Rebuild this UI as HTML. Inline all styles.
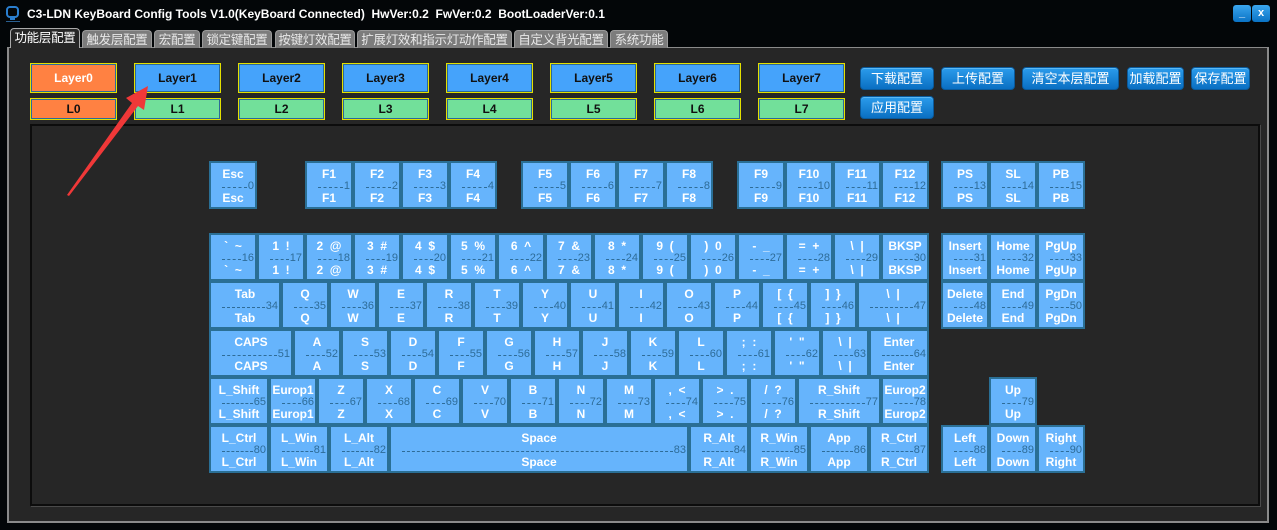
<!DOCTYPE html>
<html><head><meta charset="utf-8"><style>
*{margin:0;padding:0;box-sizing:border-box}
body{width:1277px;height:530px;background:#030608;position:relative;overflow:hidden;font-family:"Liberation Sans","Noto Sans CJK SC",sans-serif}
.title{position:absolute;left:27px;top:7px;color:#fff;font:bold 12px "Liberation Sans",sans-serif;white-space:pre}
.wb{position:absolute;top:5px;width:18px;height:17px;border-radius:3px;background:linear-gradient(#3aa6ee,#0a72c4);color:#fff;font:bold 11px "Liberation Sans",sans-serif;text-align:center;line-height:16px}
.tab{position:absolute;top:30px;height:18px;background:#7c7c7c;color:#e8e8e8;font-size:12.5px;line-height:18px;text-align:center;border-radius:4px 4px 0 0;border:1px solid #9a9a9a;border-bottom:none;white-space:nowrap;overflow:hidden;letter-spacing:-0.3px}
.tab.a{background:#262626;color:#fff;top:28px;height:20px;border-color:#aaa}
.panel{position:absolute;left:7px;top:47px;width:1262px;height:476px;background:#262626;border:2px solid #8a8a8a;border-top:1px solid #8a8a8a}
.inner{position:absolute;left:30px;top:124px;width:1230px;height:382px;background:#262626;border:2px solid #0c0c0c;box-shadow:1px 1px 0 #4a4a4a}
.ly{position:absolute;width:87px;border:1px solid #e4e000;box-shadow:inset 0 0 0 1px #2b6a98;text-align:center;font:bold 12px "Liberation Sans",sans-serif;color:#111}
.ly.t{top:63px;height:30px;line-height:28px;background:#45a3fb}
.ly.b{top:98px;height:22px;line-height:20px;background:#72e09a}
.ly.o{background:#ff8142;color:#fff}
.ly.b.o{color:#111}
.bt{position:absolute;height:23px;border-radius:4px;background:linear-gradient(#2b9cec,#0a6fc2);border:1px solid #0a5a9c;box-shadow:inset 0 1px 0 #5bb8f4;color:#fff;font-size:13px;line-height:21px;text-align:center;white-space:nowrap}
.k{position:absolute;height:48px;background:#66b4fc;border:2px solid #2a6f95;margin:-1px;color:#fff;font:bold 12px "Liberation Sans",sans-serif;text-align:center;white-space:pre}
.k b{position:absolute;left:0;right:0;line-height:13px}
.k b.u{top:5px}.k b.d{top:29px}
.k i{position:absolute;left:11px;right:1px;top:17px;height:13px;display:flex;font:normal 11px "Liberation Sans",sans-serif;color:#2e6c98;line-height:13px}
.k i s{flex:1;border-top:1px dashed #2e6c98;margin-top:7px;margin-right:1px}
</style></head><body>
<svg style="position:absolute;left:5px;top:6px" width="16" height="17"><rect x="2" y="1" width="11" height="10" rx="3" fill="none" stroke="#2a7fd0" stroke-width="2"/><rect x="5" y="11" width="5" height="3" fill="#2a7fd0"/><rect x="1" y="15" width="14" height="1" fill="#2a5f90"/></svg>
<div class="title">C3-LDN KeyBoard Config Tools V1.0(KeyBoard Connected)  HwVer:0.2  FwVer:0.2  BootLoaderVer:0.1</div>
<div class="wb" style="left:1233px">_</div><div class="wb" style="left:1252px">x</div>
<div class="panel"></div>
<div class="tab a" style="left:10px;width:70px">功能层配置</div>
<div class="tab" style="left:82px;width:70px">触发层配置</div>
<div class="tab" style="left:154px;width:46px">宏配置</div>
<div class="tab" style="left:202px;width:70px">锁定键配置</div>
<div class="tab" style="left:275px;width:80px">按键灯效配置</div>
<div class="tab" style="left:357px;width:155px">扩展灯效和指示灯动作配置</div>
<div class="tab" style="left:514px;width:94px">自定义背光配置</div>
<div class="tab" style="left:610px;width:58px">系统功能</div>
<div class="ly t o" style="left:30px">Layer0</div><div class="ly t" style="left:134px">Layer1</div><div class="ly t" style="left:238px">Layer2</div><div class="ly t" style="left:342px">Layer3</div><div class="ly t" style="left:446px">Layer4</div><div class="ly t" style="left:550px">Layer5</div><div class="ly t" style="left:654px">Layer6</div><div class="ly t" style="left:758px">Layer7</div>
<div class="ly b o" style="left:30px">L0</div><div class="ly b" style="left:134px">L1</div><div class="ly b" style="left:238px">L2</div><div class="ly b" style="left:342px">L3</div><div class="ly b" style="left:446px">L4</div><div class="ly b" style="left:550px">L5</div><div class="ly b" style="left:654px">L6</div><div class="ly b" style="left:758px">L7</div>
<div class="bt" style="left:860px;top:67px;width:74px">下载配置</div>
<div class="bt" style="left:941px;top:67px;width:74px">上传配置</div>
<div class="bt" style="left:1022px;top:67px;width:97px">清空本层配置</div>
<div class="bt" style="left:1127px;top:67px;width:57px">加载配置</div>
<div class="bt" style="left:1191px;top:67px;width:59px">保存配置</div>
<div class="bt" style="left:860px;top:96px;width:74px">应用配置</div>
<div class="inner"></div>

<div class="k" style="left:210px;top:162px;width:48px"><b class="u">Esc</b><i><s></s>0</i><b class="d">Esc</b></div>
<div class="k" style="left:306px;top:162px;width:48px"><b class="u">F1</b><i><s></s>1</i><b class="d">F1</b></div>
<div class="k" style="left:354px;top:162px;width:48px"><b class="u">F2</b><i><s></s>2</i><b class="d">F2</b></div>
<div class="k" style="left:402px;top:162px;width:48px"><b class="u">F3</b><i><s></s>3</i><b class="d">F3</b></div>
<div class="k" style="left:450px;top:162px;width:48px"><b class="u">F4</b><i><s></s>4</i><b class="d">F4</b></div>
<div class="k" style="left:522px;top:162px;width:48px"><b class="u">F5</b><i><s></s>5</i><b class="d">F5</b></div>
<div class="k" style="left:570px;top:162px;width:48px"><b class="u">F6</b><i><s></s>6</i><b class="d">F6</b></div>
<div class="k" style="left:618px;top:162px;width:48px"><b class="u">F7</b><i><s></s>7</i><b class="d">F7</b></div>
<div class="k" style="left:666px;top:162px;width:48px"><b class="u">F8</b><i><s></s>8</i><b class="d">F8</b></div>
<div class="k" style="left:738px;top:162px;width:48px"><b class="u">F9</b><i><s></s>9</i><b class="d">F9</b></div>
<div class="k" style="left:786px;top:162px;width:48px"><b class="u">F10</b><i><s></s>10</i><b class="d">F10</b></div>
<div class="k" style="left:834px;top:162px;width:48px"><b class="u">F11</b><i><s></s>11</i><b class="d">F11</b></div>
<div class="k" style="left:882px;top:162px;width:48px"><b class="u">F12</b><i><s></s>12</i><b class="d">F12</b></div>
<div class="k" style="left:942px;top:162px;width:48px"><b class="u">PS</b><i><s></s>13</i><b class="d">PS</b></div>
<div class="k" style="left:990px;top:162px;width:48px"><b class="u">SL</b><i><s></s>14</i><b class="d">SL</b></div>
<div class="k" style="left:1038px;top:162px;width:48px"><b class="u">PB</b><i><s></s>15</i><b class="d">PB</b></div>

<div class="k" style="left:210px;top:234px;width:48px"><b class="u">`  ~</b><i><s></s>16</i><b class="d">`  ~</b></div>
<div class="k" style="left:258px;top:234px;width:48px"><b class="u">1  !</b><i><s></s>17</i><b class="d">1  !</b></div>
<div class="k" style="left:306px;top:234px;width:48px"><b class="u">2  @</b><i><s></s>18</i><b class="d">2  @</b></div>
<div class="k" style="left:354px;top:234px;width:48px"><b class="u">3  #</b><i><s></s>19</i><b class="d">3  #</b></div>
<div class="k" style="left:402px;top:234px;width:48px"><b class="u">4  $</b><i><s></s>20</i><b class="d">4  $</b></div>
<div class="k" style="left:450px;top:234px;width:48px"><b class="u">5  %</b><i><s></s>21</i><b class="d">5  %</b></div>
<div class="k" style="left:498px;top:234px;width:48px"><b class="u">6  ^</b><i><s></s>22</i><b class="d">6  ^</b></div>
<div class="k" style="left:546px;top:234px;width:48px"><b class="u">7  &amp;</b><i><s></s>23</i><b class="d">7  &amp;</b></div>
<div class="k" style="left:594px;top:234px;width:48px"><b class="u">8  *</b><i><s></s>24</i><b class="d">8  *</b></div>
<div class="k" style="left:642px;top:234px;width:48px"><b class="u">9  (</b><i><s></s>25</i><b class="d">9  (</b></div>
<div class="k" style="left:690px;top:234px;width:48px"><b class="u">)  0</b><i><s></s>26</i><b class="d">)  0</b></div>
<div class="k" style="left:738px;top:234px;width:48px"><b class="u">-  _</b><i><s></s>27</i><b class="d">-  _</b></div>
<div class="k" style="left:786px;top:234px;width:48px"><b class="u">=  +</b><i><s></s>28</i><b class="d">=  +</b></div>
<div class="k" style="left:834px;top:234px;width:48px"><b class="u">\  |</b><i><s></s>29</i><b class="d">\  |</b></div>
<div class="k" style="left:882px;top:234px;width:48px"><b class="u">BKSP</b><i><s></s>30</i><b class="d">BKSP</b></div>
<div class="k" style="left:942px;top:234px;width:48px"><b class="u">Insert</b><i><s></s>31</i><b class="d">Insert</b></div>
<div class="k" style="left:990px;top:234px;width:48px"><b class="u">Home</b><i><s></s>32</i><b class="d">Home</b></div>
<div class="k" style="left:1038px;top:234px;width:48px"><b class="u">PgUp</b><i><s></s>33</i><b class="d">PgUp</b></div>

<div class="k" style="left:210px;top:282px;width:72px"><b class="u">Tab</b><i><s></s>34</i><b class="d">Tab</b></div>
<div class="k" style="left:282px;top:282px;width:48px"><b class="u">Q</b><i><s></s>35</i><b class="d">Q</b></div>
<div class="k" style="left:330px;top:282px;width:48px"><b class="u">W</b><i><s></s>36</i><b class="d">W</b></div>
<div class="k" style="left:378px;top:282px;width:48px"><b class="u">E</b><i><s></s>37</i><b class="d">E</b></div>
<div class="k" style="left:426px;top:282px;width:48px"><b class="u">R</b><i><s></s>38</i><b class="d">R</b></div>
<div class="k" style="left:474px;top:282px;width:48px"><b class="u">T</b><i><s></s>39</i><b class="d">T</b></div>
<div class="k" style="left:522px;top:282px;width:48px"><b class="u">Y</b><i><s></s>40</i><b class="d">Y</b></div>
<div class="k" style="left:570px;top:282px;width:48px"><b class="u">U</b><i><s></s>41</i><b class="d">U</b></div>
<div class="k" style="left:618px;top:282px;width:48px"><b class="u">I</b><i><s></s>42</i><b class="d">I</b></div>
<div class="k" style="left:666px;top:282px;width:48px"><b class="u">O</b><i><s></s>43</i><b class="d">O</b></div>
<div class="k" style="left:714px;top:282px;width:48px"><b class="u">P</b><i><s></s>44</i><b class="d">P</b></div>
<div class="k" style="left:762px;top:282px;width:48px"><b class="u">[  {</b><i><s></s>45</i><b class="d">[  {</b></div>
<div class="k" style="left:810px;top:282px;width:48px"><b class="u">]  }</b><i><s></s>46</i><b class="d">]  }</b></div>
<div class="k" style="left:858px;top:282px;width:72px"><b class="u">\  |</b><i><s></s>47</i><b class="d">\  |</b></div>
<div class="k" style="left:942px;top:282px;width:48px"><b class="u">Delete</b><i><s></s>48</i><b class="d">Delete</b></div>
<div class="k" style="left:990px;top:282px;width:48px"><b class="u">End</b><i><s></s>49</i><b class="d">End</b></div>
<div class="k" style="left:1038px;top:282px;width:48px"><b class="u">PgDn</b><i><s></s>50</i><b class="d">PgDn</b></div>

<div class="k" style="left:210px;top:330px;width:84px"><b class="u">CAPS</b><i><s></s>51</i><b class="d">CAPS</b></div>
<div class="k" style="left:294px;top:330px;width:48px"><b class="u">A</b><i><s></s>52</i><b class="d">A</b></div>
<div class="k" style="left:342px;top:330px;width:48px"><b class="u">S</b><i><s></s>53</i><b class="d">S</b></div>
<div class="k" style="left:390px;top:330px;width:48px"><b class="u">D</b><i><s></s>54</i><b class="d">D</b></div>
<div class="k" style="left:438px;top:330px;width:48px"><b class="u">F</b><i><s></s>55</i><b class="d">F</b></div>
<div class="k" style="left:486px;top:330px;width:48px"><b class="u">G</b><i><s></s>56</i><b class="d">G</b></div>
<div class="k" style="left:534px;top:330px;width:48px"><b class="u">H</b><i><s></s>57</i><b class="d">H</b></div>
<div class="k" style="left:582px;top:330px;width:48px"><b class="u">J</b><i><s></s>58</i><b class="d">J</b></div>
<div class="k" style="left:630px;top:330px;width:48px"><b class="u">K</b><i><s></s>59</i><b class="d">K</b></div>
<div class="k" style="left:678px;top:330px;width:48px"><b class="u">L</b><i><s></s>60</i><b class="d">L</b></div>
<div class="k" style="left:726px;top:330px;width:48px"><b class="u">;  :</b><i><s></s>61</i><b class="d">;  :</b></div>
<div class="k" style="left:774px;top:330px;width:48px"><b class="u">'  "</b><i><s></s>62</i><b class="d">'  "</b></div>
<div class="k" style="left:822px;top:330px;width:48px"><b class="u">\  |</b><i><s></s>63</i><b class="d">\  |</b></div>
<div class="k" style="left:870px;top:330px;width:60px"><b class="u">Enter</b><i><s></s>64</i><b class="d">Enter</b></div>

<div class="k" style="left:210px;top:378px;width:60px"><b class="u">L_Shift</b><i><s></s>65</i><b class="d">L_Shift</b></div>
<div class="k" style="left:270px;top:378px;width:48px"><b class="u">Europ1</b><i><s></s>66</i><b class="d">Europ1</b></div>
<div class="k" style="left:318px;top:378px;width:48px"><b class="u">Z</b><i><s></s>67</i><b class="d">Z</b></div>
<div class="k" style="left:366px;top:378px;width:48px"><b class="u">X</b><i><s></s>68</i><b class="d">X</b></div>
<div class="k" style="left:414px;top:378px;width:48px"><b class="u">C</b><i><s></s>69</i><b class="d">C</b></div>
<div class="k" style="left:462px;top:378px;width:48px"><b class="u">V</b><i><s></s>70</i><b class="d">V</b></div>
<div class="k" style="left:510px;top:378px;width:48px"><b class="u">B</b><i><s></s>71</i><b class="d">B</b></div>
<div class="k" style="left:558px;top:378px;width:48px"><b class="u">N</b><i><s></s>72</i><b class="d">N</b></div>
<div class="k" style="left:606px;top:378px;width:48px"><b class="u">M</b><i><s></s>73</i><b class="d">M</b></div>
<div class="k" style="left:654px;top:378px;width:48px"><b class="u">,  &lt;</b><i><s></s>74</i><b class="d">,  &lt;</b></div>
<div class="k" style="left:702px;top:378px;width:48px"><b class="u">&gt;  .</b><i><s></s>75</i><b class="d">&gt;  .</b></div>
<div class="k" style="left:750px;top:378px;width:48px"><b class="u">/  ?</b><i><s></s>76</i><b class="d">/  ?</b></div>
<div class="k" style="left:798px;top:378px;width:84px"><b class="u">R_Shift</b><i><s></s>77</i><b class="d">R_Shift</b></div>
<div class="k" style="left:882px;top:378px;width:48px"><b class="u">Europ2</b><i><s></s>78</i><b class="d">Europ2</b></div>
<div class="k" style="left:990px;top:378px;width:48px"><b class="u">Up</b><i><s></s>79</i><b class="d">Up</b></div>

<div class="k" style="left:210px;top:426px;width:60px"><b class="u">L_Ctrl</b><i><s></s>80</i><b class="d">L_Ctrl</b></div>
<div class="k" style="left:270px;top:426px;width:60px"><b class="u">L_Win</b><i><s></s>81</i><b class="d">L_Win</b></div>
<div class="k" style="left:330px;top:426px;width:60px"><b class="u">L_Alt</b><i><s></s>82</i><b class="d">L_Alt</b></div>
<div class="k" style="left:390px;top:426px;width:300px"><b class="u">Space</b><i><s></s>83</i><b class="d">Space</b></div>
<div class="k" style="left:690px;top:426px;width:60px"><b class="u">R_Alt</b><i><s></s>84</i><b class="d">R_Alt</b></div>
<div class="k" style="left:750px;top:426px;width:60px"><b class="u">R_Win</b><i><s></s>85</i><b class="d">R_Win</b></div>
<div class="k" style="left:810px;top:426px;width:60px"><b class="u">App</b><i><s></s>86</i><b class="d">App</b></div>
<div class="k" style="left:870px;top:426px;width:60px"><b class="u">R_Ctrl</b><i><s></s>87</i><b class="d">R_Ctrl</b></div>
<div class="k" style="left:942px;top:426px;width:48px"><b class="u">Left</b><i><s></s>88</i><b class="d">Left</b></div>
<div class="k" style="left:990px;top:426px;width:48px"><b class="u">Down</b><i><s></s>89</i><b class="d">Down</b></div>
<div class="k" style="left:1038px;top:426px;width:48px"><b class="u">Right</b><i><s></s>90</i><b class="d">Right</b></div>

<svg style="position:absolute;left:0;top:0" width="1277" height="530"><polygon points="67,195 132,103 126,98 148,86 144,110 138,106 69,196" fill="#f03838"/></svg>
</body></html>
